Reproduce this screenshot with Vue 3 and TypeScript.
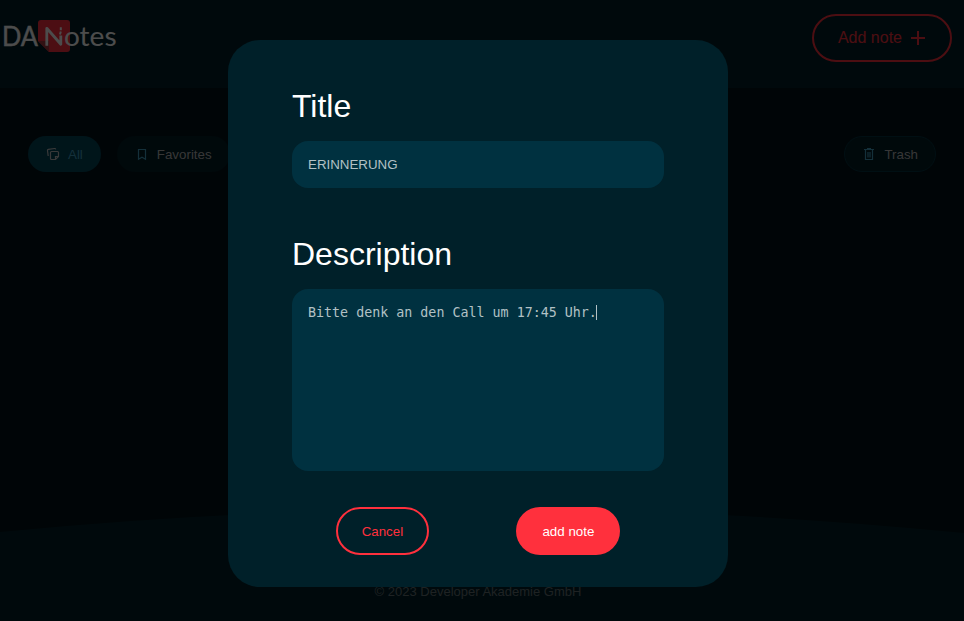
<script setup lang="ts">
import { ref } from 'vue'

const title = ref('ERINNERUNG')
const description = ref('Bitte denk an den Call um 17:45 Uhr.')
</script>

<template>
  <div class="page">
    <header class="header">
      <svg class="logo" width="120" height="40" viewBox="0 0 120 40">
        <path class="logo-box" d="M41 4H67Q70 4 70 7V33Q70 36 67 36H49L38 25V7Q38 4 41 4Z" />
        <path class="logo-fold" d="M38 25H49V36Z" />
        <text class="logo-text" x="2" y="29.6" textLength="36" lengthAdjust="spacingAndGlyphs">DA</text>
        <path class="logo-n" d="M46.8 29.8V12.3L60.8 28.2V19.5" />
        <path class="logo-accent" d="M60.8 11.2V14.2M60.8 15.5L60 18.5" />
        <text class="logo-text lower" x="64" y="29.6" textLength="52.5" lengthAdjust="spacingAndGlyphs">otes</text>
      </svg>
      <button class="outline add" type="button">
        <span>Add note</span>
        <svg width="16" height="16" viewBox="0 0 16 16"><path d="M8 1V15M1 8H15" /></svg>
      </button>
    </header>
    <main class="content">
      <nav class="filters">
        <button class="chip active" type="button">
          <svg width="14" height="14" viewBox="0 0 14 14">
            <path d="M2.2 9L1.5 3.5Q1.4 2.5 2.4 2.3L8.5 1.5Q9.5 1.4 9.8 2.4" />
            <path d="M5.5 4.5H11.5Q12.5 4.5 12.5 5.5V9.5L9.5 12.5H5.5Q4.5 12.5 4.5 11.5V5.5Q4.5 4.5 5.5 4.5ZM9.5 12.5V9.5H12.5" />
          </svg>
          <span>All</span>
        </button>
        <button class="chip" type="button">
          <svg width="14" height="14" viewBox="0 0 14 14"><path d="M3.5 2.5V12.2L7 10.2L10.5 12.2V2.5Z" /></svg>
          <span>Favorites</span>
        </button>
      </nav>
      <button class="chip trash" type="button">
        <svg width="14" height="14" viewBox="0 0 14 14"><path d="M2 2.5H12M5 1.7H9M3.5 2.5V12.5H10.5V2.5M6 5V10.5M8 5V10.5" /></svg>
        <span>Trash</span>
      </button>
    </main>
    <footer class="footer">
      <svg class="curve" viewBox="0 0 964 30" preserveAspectRatio="none"><path d="M0 24Q478 -23 964 25V30H0Z" /></svg>
      <p>© 2023 Developer Akademie GmbH</p>
    </footer>
  </div>
  <div class="overlay">
    <form class="dialog" @submit.prevent>
      <label for="title">Title</label>
      <input id="title" v-model="title" type="text">
      <label for="description">Description</label>
      <div class="editor">
        <textarea id="description" v-model="description" spellcheck="false"></textarea>
        <i class="caret"></i>
      </div>
      <div class="actions">
        <button class="outline" type="button">Cancel</button>
        <button class="filled" type="submit">add note</button>
      </div>
    </form>
  </div>
</template>

<style>
body {
  margin: 0;
  background: #001319;
  overflow: hidden;
}
</style>

<style scoped>
* {
  box-sizing: border-box;
}
.page {
  height: 621px;
  display: flex;
  flex-direction: column;
  font-family: "Liberation Sans", Arial, sans-serif;
}
button {
  font: 13.333px "Liberation Sans", Arial, sans-serif;
}
svg {
  display: block;
  flex: none;
}
.header {
  height: 88px;
  flex: none;
  display: flex;
  justify-content: space-between;
  align-items: flex-start;
  padding: 14px 12px 0 0;
  background: #00212a;
}
.logo {
  margin-top: 2px;
}
.logo-box { fill: #ff3040; }
.logo-fold { fill: #a83a41; }
.logo-text { font: 26px Lato, sans-serif; fill: #fff; stroke: #fff; stroke-width: 0.4; }
.lower { font-size: 27px; stroke-width: 0; }
.logo-n { fill: none; stroke: #fff; stroke-width: 2.8; stroke-linejoin: round; }
.logo-accent { fill: none; stroke: #fff; stroke-width: 2; }
.outline {
  height: 48px;
  padding: 0 24px;
  border: 2px solid #ff303d;
  border-radius: 24px;
  color: #ff303d;
  background: transparent;
}
.add {
  display: flex;
  align-items: center;
  gap: 8px;
  font-size: 16px;
}
.add svg { fill: none; stroke: #ff303d; stroke-width: 2; }
.content {
  flex: 1;
  display: flex;
  justify-content: space-between;
  align-items: flex-start;
  padding: 48px 28px 0;
}
.filters {
  display: flex;
  gap: 16px;
}
.chip {
  height: 36px;
  display: flex;
  align-items: center;
  gap: 8px;
  padding: 0 17px;
  border: 1px solid transparent;
  border-radius: 18px;
  background: #001e26;
  color: #b8b8b8;
}
.chip svg { fill: none; stroke: #45a0c2; stroke-width: 1.2; }
.active { background: #004659; color: #45a0c2; }
.active svg { stroke: #c0c0c0; }
.trash { border-color: #003340; }
.footer {
  height: 113px;
  flex: none;
}
.curve {
  width: 100%;
  height: 30px;
}
.curve path { fill: #00212a; }
.footer p {
  height: 83px;
  margin: 0;
  padding: 46px 8px 0 0;
  font-size: 13px;
  line-height: 15px;
  text-align: center;
  color: #667377;
  background: #00212a;
}
.overlay {
  position: fixed;
  inset: 0;
  padding: 40px 8px 0 0;
  background: rgba(0, 0, 0, 0.7);
}
.dialog {
  width: 500px;
  height: 547px;
  margin: 0 auto;
  padding: 48px 64px 32px;
  display: flex;
  flex-direction: column;
  border-radius: 32px;
  background: #002029;
  font-family: "Liberation Sans", Arial, sans-serif;
}
label {
  height: 37px;
  margin-bottom: 16px;
  font-size: 32px;
  line-height: 37px;
  color: #fff;
}
input {
  height: 47px;
  margin: 0 0 48px;
  padding: 16px;
  border: 0;
  border-radius: 16px;
  outline: 0;
  font: 13.333px "Liberation Sans", Arial, sans-serif;
  color: #b2c1c5;
  background: #003140;
}
.editor {
  position: relative;
  height: 182px;
}
textarea {
  display: block;
  width: 100%;
  height: 100%;
  padding: 16px;
  border: 0;
  border-radius: 16px;
  outline: 0;
  resize: none;
  font: 13.333px "DejaVu Sans Mono", monospace;
  color: #b2c1c5;
  background: #003140;
}
.caret {
  position: absolute;
  left: 304px;
  top: 16px;
  width: 1px;
  height: 15px;
  background: #b2c1c5;
}
.actions {
  display: flex;
  justify-content: space-around;
  margin-top: 36px;
}
.filled {
  height: 48px;
  padding: 0 26px;
  border: 0;
  border-radius: 24px;
  color: #fff;
  background: #ff303d;
}
</style>
